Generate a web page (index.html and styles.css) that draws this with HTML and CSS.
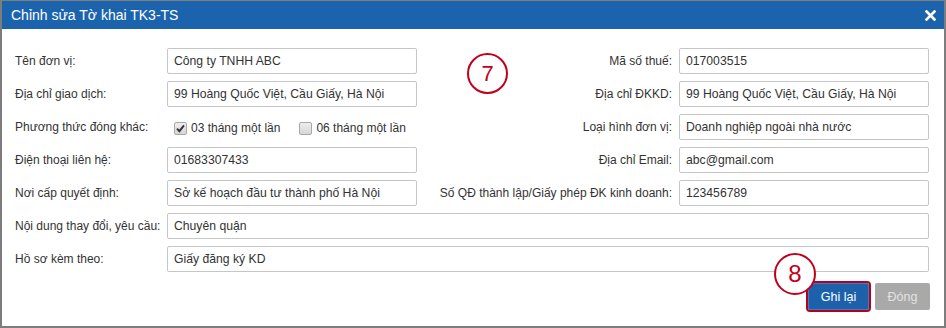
FILE: index.html
```html
<!DOCTYPE html>
<html>
<head>
  <meta charset="utf-8">
  <title>Chỉnh sửa Tờ khai TK3-TS</title>
  <link rel="stylesheet" href="styles.css">
</head>
<body>
  <div class="dialog">
    <div class="dialog-header">
      <span class="dialog-title">Chỉnh sửa Tờ khai TK3-TS</span>
      <span class="close-btn">
        <svg width="11" height="11" viewBox="0 0 11 11"><path d="M1.5 1.5 L9.5 9.5 M9.5 1.5 L1.5 9.5" stroke="#fff" stroke-width="2.6" stroke-linecap="square"/></svg>
      </span>
    </div>

    <div class="dialog-body">
      <div class="form-grid">
        <label class="lbl">Tên đơn vị:</label>
        <div class="field">Công ty TNHH ABC</div>
        <label class="lbl lbl-right">Mã số thuế:</label>
        <div class="field">017003515</div>

        <label class="lbl">Địa chỉ giao dịch:</label>
        <div class="field">99 Hoàng Quốc Việt, Cầu Giấy, Hà Nội</div>
        <label class="lbl lbl-right">Địa chỉ ĐKKD:</label>
        <div class="field">99 Hoàng Quốc Việt, Cầu Giấy, Hà Nội</div>

        <label class="lbl">Phương thức đóng khác:</label>
        <div class="checks">
          <span class="check-item">
            <span class="cbox checked">
              <svg width="9" height="9" viewBox="0 0 9 9"><path d="M1 4.6 L3.4 7.2 L8 1.4" fill="none" stroke="#333" stroke-width="1.9"/></svg>
            </span>
            03 tháng một lần
          </span>
          <span class="check-item">
            <span class="cbox"></span>
            06 tháng một lần
          </span>
        </div>
        <label class="lbl lbl-right">Loại hình đơn vị:</label>
        <div class="field">Doanh nghiệp ngoài nhà nước</div>

        <label class="lbl">Điện thoại liên hệ:</label>
        <div class="field">01683307433</div>
        <label class="lbl lbl-right">Địa chỉ Email:</label>
        <div class="field">abc@gmail.com</div>

        <label class="lbl">Nơi cấp quyết định:</label>
        <div class="field">Sở kế hoạch đầu tư thành phố Hà Nội</div>
        <label class="lbl lbl-right">Số QĐ thành lập/Giấy phép ĐK kinh doanh:</label>
        <div class="field">123456789</div>

        <label class="lbl">Nội dung thay đổi, yêu cầu:</label>
        <div class="field field-wide">Chuyên quận</div>

        <label class="lbl">Hồ sơ kèm theo:</label>
        <div class="field field-wide">Giấy đăng ký KD</div>
      </div>

      <div class="actions">
        <span class="btn btn-primary">Ghi lại</span>
        <span class="btn btn-disabled">Đóng</span>
      </div>

      <!-- annotation markers -->
      <span class="marker marker-7">7</span>
      <span class="marker marker-8">8</span>
    </div>
  </div>
</body>
</html>
```

FILE: styles.css
```css
html, body{
    margin:0;
    padding:0;
    background:#fff;
}

body{
    font-family:"Liberation Sans", Arial, sans-serif;
    font-size:12px;
    color:#333;
}

.dialog{
    width:946px;
    height:328px;
    box-sizing:border-box;
    border:2px solid #7d7d7d;
    border-top-width:1px;
    display:flex;
    flex-direction:column;
}

.dialog-header{
    height:28px;
    background-color:#1c63ae;
    display:flex;
    align-items:center;
    justify-content:space-between;
    padding:0 8px 0 9px;
}

.dialog-title{
    color:#fff;
    font-size:14px;
}

.close-btn{
    display:flex;
    align-items:center;
    margin-top:1px;
}

.dialog-body{
    position:relative;
    flex:1;
    padding:19px 15px 0 13px;
}

.form-grid{
    display:grid;
    grid-template-columns:152px 250px 262px 250px;
    grid-auto-rows:26px;
    row-gap:7px;
}

.lbl{
    display:flex;
    align-items:center;
    white-space:nowrap;
}

.lbl-right{
    justify-content:flex-end;
    padding-right:7px;
}

.field{
    box-sizing:border-box;
    border:1px solid #c6c6c6;
    border-radius:2px;
    padding:0 6px;
    display:flex;
    align-items:center;
    font-size:12.2px;
    color:#333;
    white-space:nowrap;
    overflow:hidden;
}

.field-wide{
    grid-column:2 / 5;
}

.checks{
    display:flex;
    align-items:center;
    padding-left:7px;
    padding-top:2px;
    gap:19px;
}

.check-item{
    display:flex;
    align-items:center;
    gap:4px;
}

.cbox{
    width:11px;
    height:11px;
    border:1px solid #a8a8a8;
    border-radius:2px;
    background:linear-gradient(#eee, #d6d6d6);
    display:flex;
    align-items:center;
    justify-content:center;
}

.actions{
    display:flex;
    justify-content:flex-end;
    gap:6px;
    margin-top:11px;
    margin-right:-1px;
}

.btn{
    height:27px;
    box-sizing:border-box;
    display:flex;
    align-items:center;
    justify-content:center;
    font-size:12.5px;
    border-radius:2px;
}

.btn-primary{
    width:61px;
    background-color:#1d61ab;
    border:1px solid #3c7ec4;
    color:#fff;
    outline:2px solid #b5001a;
}

.btn-disabled{
    width:55px;
    background-color:#a9a9a9;
    color:#e2e2e2;
}

/* red callout circles */
.marker{
    position:absolute;
    box-sizing:border-box;
    border:2px solid #c3001c;
    border-radius:50%;
    background:#fff;
    color:#c3001c;
    display:flex;
    align-items:center;
    justify-content:center;
    z-index:2;
}

.marker-7{
    left:465px;
    top:24px;
    width:41px;
    height:41px;
    font-size:22px;
}

.marker-8{
    left:772px;
    top:224px;
    width:42px;
    height:42px;
    font-size:24px;
}
```
